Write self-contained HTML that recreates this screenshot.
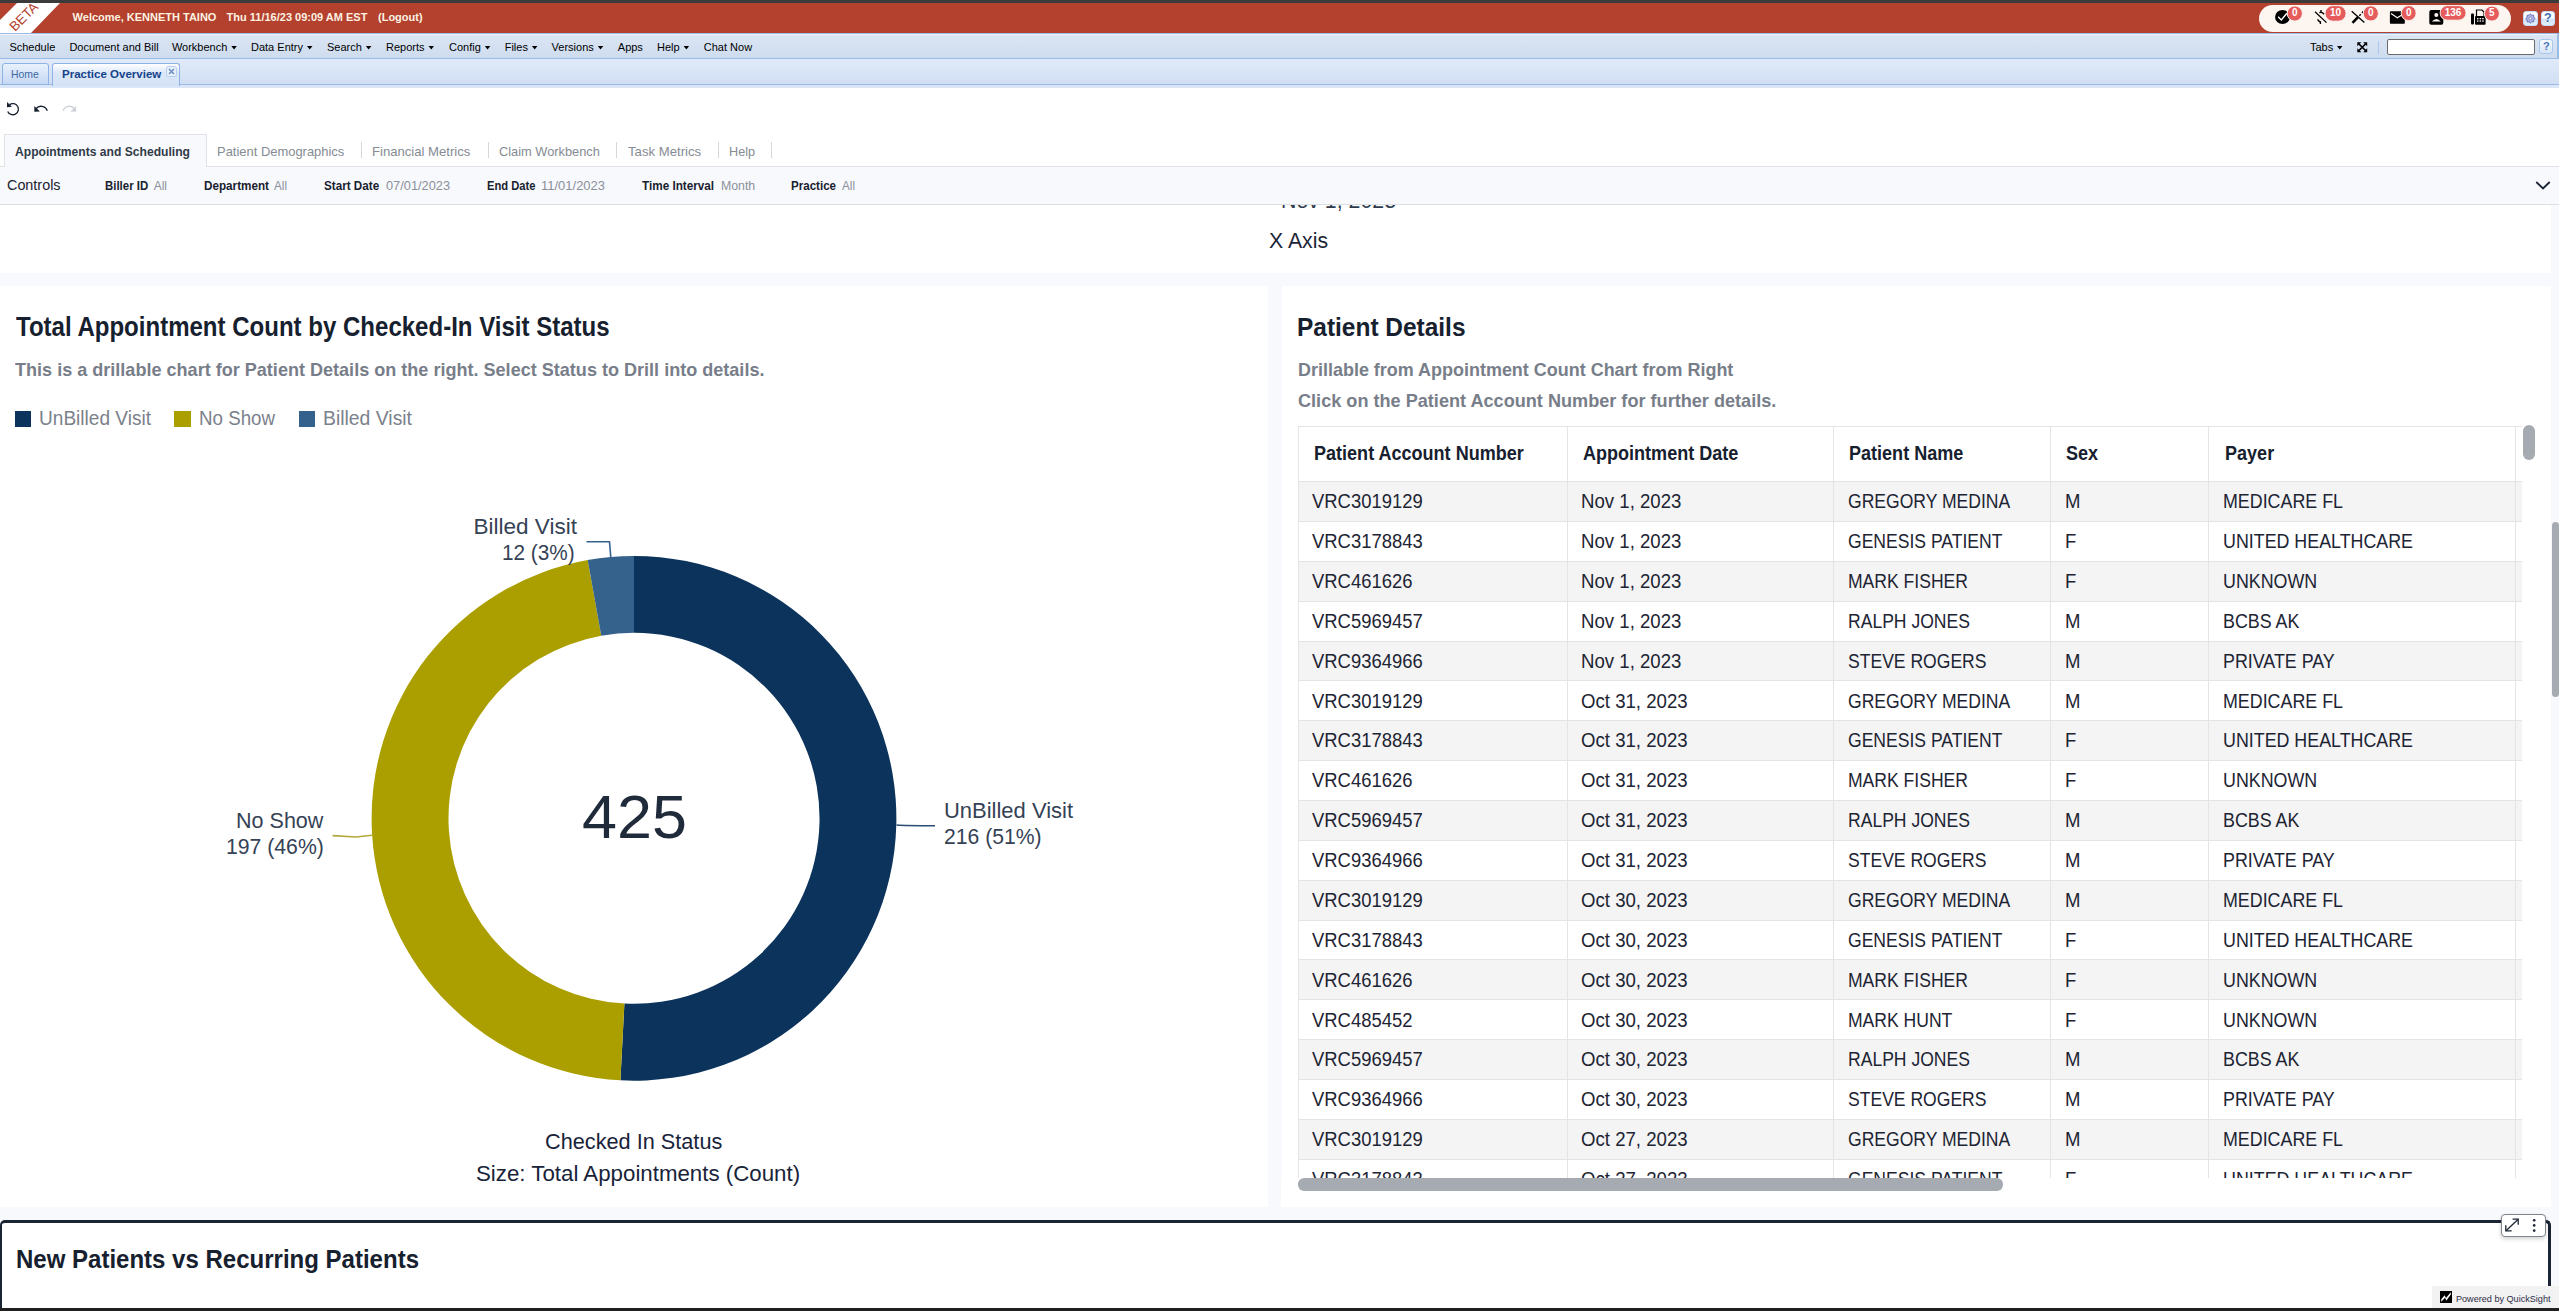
<!DOCTYPE html><html><head><meta charset="utf-8"><style>
html,body{margin:0;padding:0;width:2559px;height:1311px;overflow:hidden;background:#fff;font-family:"Liberation Sans", sans-serif;}
.t{position:absolute;white-space:nowrap;transform-origin:0 0;line-height:1;}
</style></head><body>
<div style="position:absolute;left:0px;top:88px;width:2559px;height:1223px;background:#ffffff;"></div>
<div style="position:absolute;left:0px;top:0px;width:2559px;height:3px;background:#3b3b3b;"></div>
<div style="position:absolute;left:0px;top:3px;width:2559px;height:30px;background:#b3412e;"></div>
<div style="position:absolute;left:0px;top:33px;width:2559px;height:26px;background:linear-gradient(#dbe6f4,#cfdcee);border-top:1px solid #99bbe8;border-bottom:1px solid #99bbe8;box-sizing:border-box;"></div>
<div style="position:absolute;left:0px;top:59px;width:2559px;height:29px;background:linear-gradient(#e0eafa,#cfdcf1);"></div>
<div style="position:absolute;left:2551px;top:204px;width:8px;height:1107px;background:#f8f9fd;"></div>
<div style="position:absolute;left:0px;top:273.3px;width:2551px;height:13.2px;background:#f8f9fd;"></div>
<div style="position:absolute;left:1268.4px;top:286px;width:13.2px;height:921px;background:#f8f9fd;"></div>
<div style="position:absolute;left:0px;top:1207px;width:2551px;height:12.5px;background:#f8f9fd;"></div>
<div class="t" style="left:1281.00px;top:190px;font-size:22px;color:#2f3b4c;transform:scaleX(0.9693);">Nov 1, 2023</div>
<svg style="position:absolute;left:0;top:3px" width="70" height="30"><polygon points="17,0 60,0 31,30 -13,30" fill="#fff"/><text x="0" y="0" transform="translate(15,29) rotate(-45)" font-family="Liberation Sans" font-size="13.5" fill="#b3412e">BETA</text></svg>
<div style="position:absolute;left:2259px;top:5px;width:251.5px;height:27px;background:#fcf5f0;border-radius:14px;"></div>
<div style="position:absolute;left:2557px;top:33px;width:2px;height:26px;background:#99bbe8;"></div>
<div style="position:absolute;left:0px;top:34px;width:2557px;height:1px;background:rgba(255,255,255,0.55);"></div>
<div style="position:absolute;left:0px;top:84.3px;width:2559px;height:1px;background:#99bbe8;"></div>
<div style="position:absolute;left:0px;top:85.3px;width:2559px;height:2.7px;background:#dbe7f9;"></div>
<div style="position:absolute;left:0px;top:166px;width:2559px;height:1px;background:#dfe2e7;"></div>
<div style="position:absolute;left:0px;top:167px;width:2559px;height:37.5px;background:#f8f9fd;border-bottom:1px solid #dcdfe4;box-sizing:border-box;"></div>
<div style="position:absolute;left:15px;top:410.6px;width:16px;height:16.3px;background:#0b335b;"></div>
<div style="position:absolute;left:174px;top:410.6px;width:16.6px;height:16.3px;background:#ab9f00;"></div>
<div style="position:absolute;left:299px;top:410.6px;width:16px;height:16.3px;background:#34628d;"></div>
<svg style="position:absolute;left:0;top:0" width="1268" height="1207">
<path d="M634.00 555.90 A262.4 262.4 0 1 1 620.43 1080.35 L624.41 1003.55 A185.5 185.5 0 1 0 634.00 632.80 Z" fill="#0b335b"/>
<path d="M620.43 1080.35 A262.4 262.4 0 0 1 587.69 560.02 L601.26 635.71 A185.5 185.5 0 0 0 624.41 1003.55 Z" fill="#ab9f00"/>
<path d="M587.69 560.02 A262.4 262.4 0 0 1 634.00 555.90 L634.00 632.80 A185.5 185.5 0 0 0 601.26 635.71 Z" fill="#34628d"/>
<path d="M586.5 541.8 H609.5 L610.8 557.5" fill="none" stroke="#34628d" stroke-width="1.6"/>
<path d="M896.5 825 Q905 825.7 935 825.7" fill="none" stroke="#2b4d72" stroke-width="1.6"/>
<path d="M332.6 835.6 L356 837 L372 835.3" fill="none" stroke="#b3a83a" stroke-width="1.6"/>
</svg>
<div style="position:absolute;left:1298px;top:426px;width:1224px;height:751.8px;overflow:hidden;"><div style="position:absolute;left:0;top:56px;width:1224px;height:40px;background:#f4f4f5;border-bottom:1px solid #e3e4e7;box-sizing:border-box;"></div><div style="position:absolute;left:0;top:96px;width:1224px;height:40px;background:#ffffff;border-bottom:1px solid #e3e4e7;box-sizing:border-box;"></div><div style="position:absolute;left:0;top:136px;width:1224px;height:40px;background:#f4f4f5;border-bottom:1px solid #e3e4e7;box-sizing:border-box;"></div><div style="position:absolute;left:0;top:176px;width:1224px;height:40px;background:#ffffff;border-bottom:1px solid #e3e4e7;box-sizing:border-box;"></div><div style="position:absolute;left:0;top:216px;width:1224px;height:39px;background:#f4f4f5;border-bottom:1px solid #e3e4e7;box-sizing:border-box;"></div><div style="position:absolute;left:0;top:255px;width:1224px;height:40px;background:#ffffff;border-bottom:1px solid #e3e4e7;box-sizing:border-box;"></div><div style="position:absolute;left:0;top:295px;width:1224px;height:40px;background:#f4f4f5;border-bottom:1px solid #e3e4e7;box-sizing:border-box;"></div><div style="position:absolute;left:0;top:335px;width:1224px;height:40px;background:#ffffff;border-bottom:1px solid #e3e4e7;box-sizing:border-box;"></div><div style="position:absolute;left:0;top:375px;width:1224px;height:40px;background:#f4f4f5;border-bottom:1px solid #e3e4e7;box-sizing:border-box;"></div><div style="position:absolute;left:0;top:415px;width:1224px;height:40px;background:#ffffff;border-bottom:1px solid #e3e4e7;box-sizing:border-box;"></div><div style="position:absolute;left:0;top:455px;width:1224px;height:40px;background:#f4f4f5;border-bottom:1px solid #e3e4e7;box-sizing:border-box;"></div><div style="position:absolute;left:0;top:495px;width:1224px;height:39px;background:#ffffff;border-bottom:1px solid #e3e4e7;box-sizing:border-box;"></div><div style="position:absolute;left:0;top:534px;width:1224px;height:40px;background:#f4f4f5;border-bottom:1px solid #e3e4e7;box-sizing:border-box;"></div><div style="position:absolute;left:0;top:574px;width:1224px;height:40px;background:#ffffff;border-bottom:1px solid #e3e4e7;box-sizing:border-box;"></div><div style="position:absolute;left:0;top:614px;width:1224px;height:40px;background:#f4f4f5;border-bottom:1px solid #e3e4e7;box-sizing:border-box;"></div><div style="position:absolute;left:0;top:654px;width:1224px;height:40px;background:#ffffff;border-bottom:1px solid #e3e4e7;box-sizing:border-box;"></div><div style="position:absolute;left:0;top:694px;width:1224px;height:40px;background:#f4f4f5;border-bottom:1px solid #e3e4e7;box-sizing:border-box;"></div><div style="position:absolute;left:0;top:734px;width:1224px;height:40px;background:#ffffff;border-bottom:1px solid #e3e4e7;box-sizing:border-box;"></div><div style="position:absolute;left:-0.50px;top:0;width:1px;height:100%;background:#e3e4e7;"></div><div style="position:absolute;left:268.80px;top:0;width:1px;height:100%;background:#e3e4e7;"></div><div style="position:absolute;left:535.30px;top:0;width:1px;height:100%;background:#e3e4e7;"></div><div style="position:absolute;left:752.40px;top:0;width:1px;height:100%;background:#e3e4e7;"></div><div style="position:absolute;left:910.00px;top:0;width:1px;height:100%;background:#e3e4e7;"></div><div style="position:absolute;left:1216.80px;top:0;width:1px;height:100%;background:#e3e4e7;"></div></div>

<svg style="position:absolute;left:0;top:0" width="2559" height="40">
 <g fill="#000">
  <!-- check circle -->
  <ellipse cx="2282.5" cy="17" rx="7.45" ry="7.05"/>
  <path d="M2278.2 16.7 L2281.3 20 L2286.9 13.2" stroke="#fff" stroke-width="1.4" fill="none"/>
  <!-- dollar slash -->
  <path d="M2315 11.8 L2326.5 22.6" stroke="#000" stroke-width="1.3"/>
  <path d="M2319.3 12.7 Q2322 11.6 2324.3 14.3 M2317.6 19.4 Q2318.8 22 2320.8 21.8" stroke="#000" stroke-width="1.4" fill="none"/>
  <path d="M2321 10 v2.5 M2320.4 21.5 v2.5" stroke="#000" stroke-width="1.4"/>
  <!-- x tool -->
  <path d="M2351.7 11.2 L2364.4 22.6" stroke="#000" stroke-width="1.3"/>
  <path d="M2352.5 22.8 L2358 17.2" stroke="#000" stroke-width="2.6"/>
  <path d="M2359.3 15.7 L2360.8 14.2 M2362 12.9 L2363.4 11.3" stroke="#000" stroke-width="1.5"/>
  <!-- envelope -->
  <rect x="2389.9" y="11.2" width="14.9" height="12.6" rx="0.8"/>
  <path d="M2391 13.5 L2397.3 17.7 L2402.6 14.4" stroke="#fcf5f0" stroke-width="1.2" fill="none"/>
  <!-- user card -->
  <rect x="2429.3" y="10" width="14" height="14.7" rx="2"/>
  <circle cx="2436.3" cy="15" r="2" fill="#fcf5f0"/>
  <path d="M2431.8 21.5 q4.5 -5 9 0 z" fill="#fcf5f0"/>
  <!-- fax -->
  <rect x="2471" y="13.5" width="3" height="11" rx="1"/>
  <rect x="2475" y="16" width="10.6" height="8.7" rx="1"/>
  <path d="M2476.5 16 v-6 h5.5 l2 2 v4" fill="none" stroke="#000" stroke-width="1.2"/>
  <g fill="#fcf5f0"><rect x="2477" y="18" width="1.5" height="1.3"/><rect x="2479.6" y="18" width="1.5" height="1.3"/><rect x="2482.2" y="18" width="1.5" height="1.3"/>
  <rect x="2477" y="20.4" width="1.5" height="1.3"/><rect x="2479.6" y="20.4" width="1.5" height="1.3"/><rect x="2482.2" y="20.4" width="1.5" height="1.3"/></g>
 </g>
 <g fill="#e65c5c" stroke="#fcf5f0" stroke-width="1">
  <circle cx="2294.8" cy="13.5" r="7.6"/>
  <rect x="2325" y="5.6" width="21.1" height="15.6" rx="7.8"/>
  <circle cx="2370.8" cy="13.4" r="7.6"/>
  <circle cx="2408.7" cy="13.1" r="7.5"/>
  <rect x="2440.1" y="5.6" width="26" height="14.6" rx="7.3"/>
  <circle cx="2491.9" cy="13.6" r="7.5"/>
 </g>
</svg>
<div style="position:absolute;left:2523px;top:11.1px;width:14.8px;height:14.9px;background:linear-gradient(#ffffff 45%,#d3e4f8 55%,#e2eefb);border:1px solid #c4dcf8;border-radius:3px;box-sizing:border-box;"></div>
<div style="position:absolute;left:2540.5px;top:11.1px;width:14.8px;height:14.9px;background:linear-gradient(#ffffff 45%,#d3e4f8 55%,#e2eefb);border:1px solid #c4dcf8;border-radius:3px;box-sizing:border-box;"></div>
<svg style="position:absolute;left:0;top:0" width="2559" height="60"><g fill="#000"><polygon points="231.3,46 236.8,46 234.1,49.5"/><polygon points="307.0,46 312.5,46 309.7,49.5"/><polygon points="365.9,46 371.4,46 368.6,49.5"/><polygon points="428.5,46 434.0,46 431.3,49.5"/><polygon points="484.8,46 490.3,46 487.6,49.5"/><polygon points="531.9,46 537.4,46 534.7,49.5"/><polygon points="597.8,46 603.3,46 600.5,49.5"/><polygon points="683.6,46 689.1,46 686.4,49.5"/><polygon points="2337,46 2342.5,46 2339.75,49.5"/></g></svg>
<svg style="position:absolute;left:2356.5px;top:42px" width="11" height="11"><g stroke="#000" stroke-width="1.7" fill="none"><path d="M2 2 L8.5 8.5 M8.5 2 L2 8.5"/></g><g fill="#000"><polygon points="0.3,0.3 4.3,0.3 0.3,4.3"/><polygon points="10.2,0.3 6.2,0.3 10.2,4.3"/><polygon points="0.3,10.2 4.3,10.2 0.3,6.2"/><polygon points="10.2,10.2 6.2,10.2 10.2,6.2"/></g></svg>
<div style="position:absolute;left:2378.3px;top:41px;width:1px;height:13px;background:#a9c6ec;"></div>
<div style="position:absolute;left:2387px;top:39.1px;width:148px;height:15.7px;background:#fff;border:1px solid #6b6b6b;border-radius:2px;box-sizing:border-box;"></div>
<div style="position:absolute;left:2539.4px;top:39px;width:13.8px;height:14.8px;background:linear-gradient(#f7fbff,#d6e4f6);border:1px solid #a9c6ec;border-radius:3px;box-sizing:border-box;"></div>
<div style="position:absolute;left:1.5px;top:63.3px;width:47px;height:21.5px;background:linear-gradient(#e9f1fc,#c5d8f3);border:1px solid #8db2e3;border-radius:3px 3px 0 0;box-sizing:border-box;"></div>
<div style="position:absolute;left:52px;top:62.9px;width:127.5px;height:23px;background:linear-gradient(#ffffff,#dce8f8 40%,#d3e2f6);border:1px solid #8db2e3;border-bottom:none;border-radius:3px 3px 0 0;box-sizing:border-box;"></div>
<svg style="position:absolute;left:0;top:95px" width="90" height="30">
 <g fill="none" stroke="#16202e" stroke-width="1.35">
  <path d="M7.7 16.4 A5.6 5.6 0 1 0 9.6 9.6"/>
  <path d="M47.3 15.8 C45.5 10.5 39 9.8 35.8 14"/>
 </g>
 <g fill="#16202e">
  <polygon points="7,6.9 7,12.3 12,11.8"/>
  <polygon points="34.3,10.9 34.3,16.8 39.9,16.5"/>
 </g>
 <path d="M63.1 15.8 C64.9 10.5 71.4 9.8 74.6 14" fill="none" stroke="#cdd1d7" stroke-width="1.35"/>
 <polygon points="76.1,10.9 76.1,16.8 70.5,16.5" fill="#cdd1d7"/>
</svg>
<div style="position:absolute;left:4.3px;top:134.2px;width:202.5px;height:33px;background:#f8f9fd;border:1px solid #dfe2e7;border-bottom:none;box-sizing:border-box;"></div>
<div style="position:absolute;left:361.2px;top:142px;width:1px;height:16px;background:#d4d8dd;"></div>
<div style="position:absolute;left:488.2px;top:142px;width:1px;height:16px;background:#d4d8dd;"></div>
<div style="position:absolute;left:616.3px;top:142px;width:1px;height:16px;background:#d4d8dd;"></div>
<div style="position:absolute;left:718.3px;top:142px;width:1px;height:16px;background:#d4d8dd;"></div>
<div style="position:absolute;left:771.2px;top:142px;width:1px;height:16px;background:#d4d8dd;"></div>
<svg style="position:absolute;left:2534px;top:179px" width="18" height="12"><path d="M2.3 3 L9 9.5 L15.7 3" fill="none" stroke="#1b2433" stroke-width="1.8"/></svg>
<div style="position:absolute;left:1298px;top:426px;width:1224px;height:1px;background:#e3e4e7;"></div>
<div style="position:absolute;left:1298px;top:481.0px;width:1224px;height:1px;background:#e3e4e7;"></div>
<div style="position:absolute;left:0px;top:1219.5px;width:2551px;height:92px;background:#fff;border:3px solid #1b2433;border-left-width:2.2px;border-bottom:none;border-radius:5px 5px 0 0;box-sizing:border-box;"></div>
<div style="position:absolute;left:2274.8px;top:6.6px;width:40px;text-align:center;font-size:10px;font-weight:bold;color:#fff;line-height:12px;">0</div>
<div style="position:absolute;left:2315.5px;top:6.6px;width:40px;text-align:center;font-size:10px;font-weight:bold;color:#fff;line-height:12px;">10</div>
<div style="position:absolute;left:2350.8px;top:6.6px;width:40px;text-align:center;font-size:10px;font-weight:bold;color:#fff;line-height:12px;">0</div>
<div style="position:absolute;left:2388.8px;top:6.6px;width:40px;text-align:center;font-size:10px;font-weight:bold;color:#fff;line-height:12px;">0</div>
<div style="position:absolute;left:2433.1px;top:6.6px;width:40px;text-align:center;font-size:10px;font-weight:bold;color:#fff;line-height:12px;">136</div>
<div style="position:absolute;left:2471.9px;top:6.6px;width:40px;text-align:center;font-size:10px;font-weight:bold;color:#fff;line-height:12px;">5</div>
<svg style="position:absolute;left:2523px;top:11px" width="15" height="15"><polygon points="12.00,7.50 10.73,8.88 10.65,10.75 8.78,10.83 7.40,12.10 6.02,10.83 4.15,10.75 4.07,8.88 2.80,7.50 4.07,6.12 4.15,4.25 6.02,4.17 7.40,2.90 8.78,4.17 10.65,4.25 10.73,6.12" fill="#aab5e8" stroke="#5f68ad" stroke-width="0.9" stroke-linejoin="round"/><circle cx="7.4" cy="7.5" r="1.3" fill="#fff" stroke="#6a72b5" stroke-width="0.7"/></svg>
<div style="position:absolute;left:2540.5px;top:11px;width:14.8px;text-align:center;font-size:12.5px;font-weight:bold;color:#3e6ea5;line-height:15px;">?</div>
<div style="position:absolute;left:2539.4px;top:39px;width:13.8px;text-align:center;font-size:11px;font-weight:bold;color:#4a78b8;line-height:15px;">?</div>
<svg style="position:absolute;left:166px;top:66px" width="11" height="11"><rect x="0.5" y="0.5" width="10" height="10" rx="2" fill="#e8f0fb" stroke="#b5cdee"/><path d="M3 3 L8 8 M8 3 L3 8" stroke="#6c8fc0" stroke-width="1.5"/></svg>
<div class="t" style="left:1313.60px;top:444px;font-size:19.5px;font-weight:bold;color:#16202e;transform:scaleX(0.9250);">Patient Account Number</div>
<div class="t" style="left:1583.40px;top:444px;font-size:19.5px;font-weight:bold;color:#16202e;transform:scaleX(0.9250);">Appointment Date</div>
<div class="t" style="left:1849.30px;top:444px;font-size:19.5px;font-weight:bold;color:#16202e;transform:scaleX(0.9250);">Patient Name</div>
<div class="t" style="left:2066.00px;top:444px;font-size:19.5px;font-weight:bold;color:#16202e;transform:scaleX(0.9250);">Sex</div>
<div class="t" style="left:2224.70px;top:444px;font-size:19.5px;font-weight:bold;color:#16202e;transform:scaleX(0.9250);">Payer</div>
<div class="t" style="left:1312.40px;top:492px;font-size:19.5px;color:#1d2433;transform:scaleX(0.9450);">VRC3019129</div>
<div class="t" style="left:1581.20px;top:492px;font-size:19.5px;color:#1d2433;transform:scaleX(0.9550);">Nov 1, 2023</div>
<div class="t" style="left:1847.80px;top:492px;font-size:19.5px;color:#1d2433;transform:scaleX(0.9000);">GREGORY MEDINA</div>
<div class="t" style="left:2065.00px;top:492px;font-size:19.5px;color:#1d2433;transform:scaleX(0.9500);">M</div>
<div class="t" style="left:2222.50px;top:492px;font-size:19.5px;color:#1d2433;transform:scaleX(0.9150);">MEDICARE FL</div>
<div class="t" style="left:1312.40px;top:532px;font-size:19.5px;color:#1d2433;transform:scaleX(0.9450);">VRC3178843</div>
<div class="t" style="left:1581.20px;top:532px;font-size:19.5px;color:#1d2433;transform:scaleX(0.9550);">Nov 1, 2023</div>
<div class="t" style="left:1847.80px;top:532px;font-size:19.5px;color:#1d2433;transform:scaleX(0.9000);">GENESIS PATIENT</div>
<div class="t" style="left:2065.00px;top:532px;font-size:19.5px;color:#1d2433;transform:scaleX(0.9500);">F</div>
<div class="t" style="left:2222.50px;top:532px;font-size:19.5px;color:#1d2433;transform:scaleX(0.9150);">UNITED HEALTHCARE</div>
<div class="t" style="left:1312.40px;top:572px;font-size:19.5px;color:#1d2433;transform:scaleX(0.9450);">VRC461626</div>
<div class="t" style="left:1581.20px;top:572px;font-size:19.5px;color:#1d2433;transform:scaleX(0.9550);">Nov 1, 2023</div>
<div class="t" style="left:1847.80px;top:572px;font-size:19.5px;color:#1d2433;transform:scaleX(0.9000);">MARK FISHER</div>
<div class="t" style="left:2065.00px;top:572px;font-size:19.5px;color:#1d2433;transform:scaleX(0.9500);">F</div>
<div class="t" style="left:2222.50px;top:572px;font-size:19.5px;color:#1d2433;transform:scaleX(0.9150);">UNKNOWN</div>
<div class="t" style="left:1312.40px;top:612px;font-size:19.5px;color:#1d2433;transform:scaleX(0.9450);">VRC5969457</div>
<div class="t" style="left:1581.20px;top:612px;font-size:19.5px;color:#1d2433;transform:scaleX(0.9550);">Nov 1, 2023</div>
<div class="t" style="left:1847.80px;top:612px;font-size:19.5px;color:#1d2433;transform:scaleX(0.9000);">RALPH JONES</div>
<div class="t" style="left:2065.00px;top:612px;font-size:19.5px;color:#1d2433;transform:scaleX(0.9500);">M</div>
<div class="t" style="left:2222.50px;top:612px;font-size:19.5px;color:#1d2433;transform:scaleX(0.9150);">BCBS AK</div>
<div class="t" style="left:1312.40px;top:652px;font-size:19.5px;color:#1d2433;transform:scaleX(0.9450);">VRC9364966</div>
<div class="t" style="left:1581.20px;top:652px;font-size:19.5px;color:#1d2433;transform:scaleX(0.9550);">Nov 1, 2023</div>
<div class="t" style="left:1847.80px;top:652px;font-size:19.5px;color:#1d2433;transform:scaleX(0.9000);">STEVE ROGERS</div>
<div class="t" style="left:2065.00px;top:652px;font-size:19.5px;color:#1d2433;transform:scaleX(0.9500);">M</div>
<div class="t" style="left:2222.50px;top:652px;font-size:19.5px;color:#1d2433;transform:scaleX(0.9150);">PRIVATE PAY</div>
<div class="t" style="left:1312.40px;top:692px;font-size:19.5px;color:#1d2433;transform:scaleX(0.9450);">VRC3019129</div>
<div class="t" style="left:1581.20px;top:692px;font-size:19.5px;color:#1d2433;transform:scaleX(0.9550);">Oct 31, 2023</div>
<div class="t" style="left:1847.80px;top:692px;font-size:19.5px;color:#1d2433;transform:scaleX(0.9000);">GREGORY MEDINA</div>
<div class="t" style="left:2065.00px;top:692px;font-size:19.5px;color:#1d2433;transform:scaleX(0.9500);">M</div>
<div class="t" style="left:2222.50px;top:692px;font-size:19.5px;color:#1d2433;transform:scaleX(0.9150);">MEDICARE FL</div>
<div class="t" style="left:1312.40px;top:731px;font-size:19.5px;color:#1d2433;transform:scaleX(0.9450);">VRC3178843</div>
<div class="t" style="left:1581.20px;top:731px;font-size:19.5px;color:#1d2433;transform:scaleX(0.9550);">Oct 31, 2023</div>
<div class="t" style="left:1847.80px;top:731px;font-size:19.5px;color:#1d2433;transform:scaleX(0.9000);">GENESIS PATIENT</div>
<div class="t" style="left:2065.00px;top:731px;font-size:19.5px;color:#1d2433;transform:scaleX(0.9500);">F</div>
<div class="t" style="left:2222.50px;top:731px;font-size:19.5px;color:#1d2433;transform:scaleX(0.9150);">UNITED HEALTHCARE</div>
<div class="t" style="left:1312.40px;top:771px;font-size:19.5px;color:#1d2433;transform:scaleX(0.9450);">VRC461626</div>
<div class="t" style="left:1581.20px;top:771px;font-size:19.5px;color:#1d2433;transform:scaleX(0.9550);">Oct 31, 2023</div>
<div class="t" style="left:1847.80px;top:771px;font-size:19.5px;color:#1d2433;transform:scaleX(0.9000);">MARK FISHER</div>
<div class="t" style="left:2065.00px;top:771px;font-size:19.5px;color:#1d2433;transform:scaleX(0.9500);">F</div>
<div class="t" style="left:2222.50px;top:771px;font-size:19.5px;color:#1d2433;transform:scaleX(0.9150);">UNKNOWN</div>
<div class="t" style="left:1312.40px;top:811px;font-size:19.5px;color:#1d2433;transform:scaleX(0.9450);">VRC5969457</div>
<div class="t" style="left:1581.20px;top:811px;font-size:19.5px;color:#1d2433;transform:scaleX(0.9550);">Oct 31, 2023</div>
<div class="t" style="left:1847.80px;top:811px;font-size:19.5px;color:#1d2433;transform:scaleX(0.9000);">RALPH JONES</div>
<div class="t" style="left:2065.00px;top:811px;font-size:19.5px;color:#1d2433;transform:scaleX(0.9500);">M</div>
<div class="t" style="left:2222.50px;top:811px;font-size:19.5px;color:#1d2433;transform:scaleX(0.9150);">BCBS AK</div>
<div class="t" style="left:1312.40px;top:851px;font-size:19.5px;color:#1d2433;transform:scaleX(0.9450);">VRC9364966</div>
<div class="t" style="left:1581.20px;top:851px;font-size:19.5px;color:#1d2433;transform:scaleX(0.9550);">Oct 31, 2023</div>
<div class="t" style="left:1847.80px;top:851px;font-size:19.5px;color:#1d2433;transform:scaleX(0.9000);">STEVE ROGERS</div>
<div class="t" style="left:2065.00px;top:851px;font-size:19.5px;color:#1d2433;transform:scaleX(0.9500);">M</div>
<div class="t" style="left:2222.50px;top:851px;font-size:19.5px;color:#1d2433;transform:scaleX(0.9150);">PRIVATE PAY</div>
<div class="t" style="left:1312.40px;top:891px;font-size:19.5px;color:#1d2433;transform:scaleX(0.9450);">VRC3019129</div>
<div class="t" style="left:1581.20px;top:891px;font-size:19.5px;color:#1d2433;transform:scaleX(0.9550);">Oct 30, 2023</div>
<div class="t" style="left:1847.80px;top:891px;font-size:19.5px;color:#1d2433;transform:scaleX(0.9000);">GREGORY MEDINA</div>
<div class="t" style="left:2065.00px;top:891px;font-size:19.5px;color:#1d2433;transform:scaleX(0.9500);">M</div>
<div class="t" style="left:2222.50px;top:891px;font-size:19.5px;color:#1d2433;transform:scaleX(0.9150);">MEDICARE FL</div>
<div class="t" style="left:1312.40px;top:931px;font-size:19.5px;color:#1d2433;transform:scaleX(0.9450);">VRC3178843</div>
<div class="t" style="left:1581.20px;top:931px;font-size:19.5px;color:#1d2433;transform:scaleX(0.9550);">Oct 30, 2023</div>
<div class="t" style="left:1847.80px;top:931px;font-size:19.5px;color:#1d2433;transform:scaleX(0.9000);">GENESIS PATIENT</div>
<div class="t" style="left:2065.00px;top:931px;font-size:19.5px;color:#1d2433;transform:scaleX(0.9500);">F</div>
<div class="t" style="left:2222.50px;top:931px;font-size:19.5px;color:#1d2433;transform:scaleX(0.9150);">UNITED HEALTHCARE</div>
<div class="t" style="left:1312.40px;top:971px;font-size:19.5px;color:#1d2433;transform:scaleX(0.9450);">VRC461626</div>
<div class="t" style="left:1581.20px;top:971px;font-size:19.5px;color:#1d2433;transform:scaleX(0.9550);">Oct 30, 2023</div>
<div class="t" style="left:1847.80px;top:971px;font-size:19.5px;color:#1d2433;transform:scaleX(0.9000);">MARK FISHER</div>
<div class="t" style="left:2065.00px;top:971px;font-size:19.5px;color:#1d2433;transform:scaleX(0.9500);">F</div>
<div class="t" style="left:2222.50px;top:971px;font-size:19.5px;color:#1d2433;transform:scaleX(0.9150);">UNKNOWN</div>
<div class="t" style="left:1312.40px;top:1011px;font-size:19.5px;color:#1d2433;transform:scaleX(0.9450);">VRC485452</div>
<div class="t" style="left:1581.20px;top:1011px;font-size:19.5px;color:#1d2433;transform:scaleX(0.9550);">Oct 30, 2023</div>
<div class="t" style="left:1847.80px;top:1011px;font-size:19.5px;color:#1d2433;transform:scaleX(0.9000);">MARK HUNT</div>
<div class="t" style="left:2065.00px;top:1011px;font-size:19.5px;color:#1d2433;transform:scaleX(0.9500);">F</div>
<div class="t" style="left:2222.50px;top:1011px;font-size:19.5px;color:#1d2433;transform:scaleX(0.9150);">UNKNOWN</div>
<div class="t" style="left:1312.40px;top:1050px;font-size:19.5px;color:#1d2433;transform:scaleX(0.9450);">VRC5969457</div>
<div class="t" style="left:1581.20px;top:1050px;font-size:19.5px;color:#1d2433;transform:scaleX(0.9550);">Oct 30, 2023</div>
<div class="t" style="left:1847.80px;top:1050px;font-size:19.5px;color:#1d2433;transform:scaleX(0.9000);">RALPH JONES</div>
<div class="t" style="left:2065.00px;top:1050px;font-size:19.5px;color:#1d2433;transform:scaleX(0.9500);">M</div>
<div class="t" style="left:2222.50px;top:1050px;font-size:19.5px;color:#1d2433;transform:scaleX(0.9150);">BCBS AK</div>
<div class="t" style="left:1312.40px;top:1090px;font-size:19.5px;color:#1d2433;transform:scaleX(0.9450);">VRC9364966</div>
<div class="t" style="left:1581.20px;top:1090px;font-size:19.5px;color:#1d2433;transform:scaleX(0.9550);">Oct 30, 2023</div>
<div class="t" style="left:1847.80px;top:1090px;font-size:19.5px;color:#1d2433;transform:scaleX(0.9000);">STEVE ROGERS</div>
<div class="t" style="left:2065.00px;top:1090px;font-size:19.5px;color:#1d2433;transform:scaleX(0.9500);">M</div>
<div class="t" style="left:2222.50px;top:1090px;font-size:19.5px;color:#1d2433;transform:scaleX(0.9150);">PRIVATE PAY</div>
<div class="t" style="left:1312.40px;top:1130px;font-size:19.5px;color:#1d2433;transform:scaleX(0.9450);">VRC3019129</div>
<div class="t" style="left:1581.20px;top:1130px;font-size:19.5px;color:#1d2433;transform:scaleX(0.9550);">Oct 27, 2023</div>
<div class="t" style="left:1847.80px;top:1130px;font-size:19.5px;color:#1d2433;transform:scaleX(0.9000);">GREGORY MEDINA</div>
<div class="t" style="left:2065.00px;top:1130px;font-size:19.5px;color:#1d2433;transform:scaleX(0.9500);">M</div>
<div class="t" style="left:2222.50px;top:1130px;font-size:19.5px;color:#1d2433;transform:scaleX(0.9150);">MEDICARE FL</div>
<div class="t" style="left:1312.40px;top:1170px;font-size:19.5px;color:#1d2433;transform:scaleX(0.9450);">VRC3178843</div>
<div class="t" style="left:1581.20px;top:1170px;font-size:19.5px;color:#1d2433;transform:scaleX(0.9550);">Oct 27, 2023</div>
<div class="t" style="left:1847.80px;top:1170px;font-size:19.5px;color:#1d2433;transform:scaleX(0.9000);">GENESIS PATIENT</div>
<div class="t" style="left:2065.00px;top:1170px;font-size:19.5px;color:#1d2433;transform:scaleX(0.9500);">F</div>
<div class="t" style="left:2222.50px;top:1170px;font-size:19.5px;color:#1d2433;transform:scaleX(0.9150);">UNITED HEALTHCARE</div>
<div class="t" style="left:72.60px;top:12px;font-size:11px;font-weight:bold;color:#fdf2e2;">Welcome, KENNETH TAINO</div>
<div class="t" style="left:226.60px;top:12px;font-size:11px;font-weight:bold;color:#fdf2e2;">Thu 11/16/23 09:09 AM EST</div>
<div class="t" style="left:378.00px;top:12px;font-size:11px;font-weight:bold;color:#fdf2e2;">(Logout)</div>
<div class="t" style="left:9.40px;top:42px;font-size:11px;color:#000;">Schedule</div>
<div class="t" style="left:69.40px;top:42px;font-size:11px;color:#000;">Document and Bill</div>
<div class="t" style="left:171.90px;top:42px;font-size:11px;color:#000;">Workbench</div>
<div class="t" style="left:251.00px;top:42px;font-size:11px;color:#000;">Data Entry</div>
<div class="t" style="left:327.00px;top:42px;font-size:11px;color:#000;">Search</div>
<div class="t" style="left:386.00px;top:42px;font-size:11px;color:#000;">Reports</div>
<div class="t" style="left:449.00px;top:42px;font-size:11px;color:#000;">Config</div>
<div class="t" style="left:504.70px;top:42px;font-size:11px;color:#000;">Files</div>
<div class="t" style="left:551.60px;top:42px;font-size:11px;color:#000;">Versions</div>
<div class="t" style="left:617.80px;top:42px;font-size:11px;color:#000;">Apps</div>
<div class="t" style="left:657.00px;top:42px;font-size:11px;color:#000;">Help</div>
<div class="t" style="left:703.80px;top:42px;font-size:11px;color:#000;">Chat Now</div>
<div class="t" style="left:2310.00px;top:42px;font-size:11px;color:#000;">Tabs</div>
<div class="t" style="left:11.25px;top:69px;font-size:11px;color:#416aa3;transform:scaleX(0.9474);">Home</div>
<div class="t" style="left:61.70px;top:69px;font-size:11px;font-weight:bold;color:#15428b;transform:scaleX(1.0476);">Practice Overview</div>
<div class="t" style="left:15.00px;top:145px;font-size:13px;font-weight:bold;color:#303b47;transform:scaleX(0.9320);">Appointments and Scheduling</div>
<div class="t" style="left:216.70px;top:145px;font-size:13px;color:#858b93;transform:scaleX(0.9953);">Patient Demographics</div>
<div class="t" style="left:372.00px;top:145px;font-size:13px;color:#858b93;transform:scaleX(1.0079);">Financial Metrics</div>
<div class="t" style="left:498.80px;top:145px;font-size:13px;color:#858b93;transform:scaleX(0.9858);">Claim Workbench</div>
<div class="t" style="left:627.90px;top:145px;font-size:13px;color:#858b93;transform:scaleX(1.0120);">Task Metrics</div>
<div class="t" style="left:728.80px;top:145px;font-size:13px;color:#858b93;transform:scaleX(0.9725);">Help</div>
<div class="t" style="left:7.00px;top:178px;font-size:14px;color:#19212f;transform:scaleX(1.0263);">Controls</div>
<div class="t" style="left:104.80px;top:180px;font-size:12px;font-weight:bold;color:#19212f;transform:scaleX(0.9527);">Biller ID</div>
<div class="t" style="left:153.70px;top:180px;font-size:12px;color:#8a9099;">All</div>
<div class="t" style="left:203.70px;top:180px;font-size:12px;font-weight:bold;color:#19212f;transform:scaleX(0.9748);">Department</div>
<div class="t" style="left:274.40px;top:180px;font-size:12px;color:#8a9099;transform:scaleX(0.9748);">All</div>
<div class="t" style="left:324.30px;top:180px;font-size:12px;font-weight:bold;color:#19212f;transform:scaleX(0.9738);">Start Date</div>
<div class="t" style="left:385.50px;top:180px;font-size:12px;color:#8a9099;transform:scaleX(1.0656);">07/01/2023</div>
<div class="t" style="left:486.50px;top:180px;font-size:12px;font-weight:bold;color:#19212f;transform:scaleX(0.9326);">End Date</div>
<div class="t" style="left:541.00px;top:180px;font-size:12px;color:#8a9099;transform:scaleX(1.0817);">11/01/2023</div>
<div class="t" style="left:642.20px;top:180px;font-size:12px;font-weight:bold;color:#19212f;transform:scaleX(0.9768);">Time Interval</div>
<div class="t" style="left:720.80px;top:180px;font-size:12px;color:#8a9099;transform:scaleX(1.0254);">Month</div>
<div class="t" style="left:791.40px;top:180px;font-size:12px;font-weight:bold;color:#19212f;transform:scaleX(0.9636);">Practice</div>
<div class="t" style="left:842.40px;top:180px;font-size:12px;color:#8a9099;transform:scaleX(0.9748);">All</div>
<div class="t" style="left:1268.80px;top:230px;font-size:22px;color:#1c2638;transform:scaleX(0.9656);">X Axis</div>
<div class="t" style="left:15.60px;top:314px;font-size:27px;font-weight:bold;color:#16202e;transform:scaleX(0.8899);">Total Appointment Count by Checked-In Visit Status</div>
<div class="t" style="left:15.30px;top:361px;font-size:18.5px;font-weight:bold;color:#787e89;transform:scaleX(0.9760);">This is a drillable chart for Patient Details on the right. Select Status to Drill into details.</div>
<div class="t" style="left:39.00px;top:409px;font-size:19.5px;color:#7b818b;transform:scaleX(0.9780);">UnBilled Visit</div>
<div class="t" style="left:199.00px;top:409px;font-size:19.5px;color:#7b818b;transform:scaleX(0.9605);">No Show</div>
<div class="t" style="left:323.00px;top:409px;font-size:19.5px;color:#7b818b;transform:scaleX(0.9933);">Billed Visit</div>
<div class="t" style="left:473.50px;top:516px;font-size:22.5px;color:#354255;">Billed Visit</div>
<div class="t" style="left:502.30px;top:542px;font-size:22.5px;color:#354255;transform:scaleX(0.9228);">12 (3%)</div>
<div class="t" style="left:944.00px;top:800px;font-size:22.5px;color:#354255;transform:scaleX(0.9762);">UnBilled Visit</div>
<div class="t" style="left:944.00px;top:826px;font-size:22.5px;color:#354255;transform:scaleX(0.9392);">216 (51%)</div>
<div class="t" style="left:236.40px;top:810px;font-size:22.5px;color:#354255;transform:scaleX(0.9573);">No Show</div>
<div class="t" style="left:226.00px;top:836px;font-size:22.5px;color:#354255;transform:scaleX(0.9421);">197 (46%)</div>
<div class="t" style="left:582.00px;top:786px;font-size:62px;color:#1f2a3a;transform:scaleX(1.0150);">425</div>
<div class="t" style="left:545.10px;top:1132px;font-size:21.5px;color:#18233a;transform:scaleX(1.0092);">Checked In Status</div>
<div class="t" style="left:475.50px;top:1164px;font-size:21.5px;color:#18233a;transform:scaleX(1.0363);">Size: Total Appointments (Count)</div>
<div class="t" style="left:1296.60px;top:314px;font-size:26.5px;font-weight:bold;color:#16202e;transform:scaleX(0.9227);">Patient Details</div>
<div class="t" style="left:1297.50px;top:361px;font-size:18.5px;font-weight:bold;color:#787e89;transform:scaleX(0.9708);">Drillable from Appointment Count Chart from Right</div>
<div class="t" style="left:1297.50px;top:392px;font-size:18.5px;font-weight:bold;color:#787e89;transform:scaleX(0.9790);">Click on the Patient Account Number for further details.</div>
<div class="t" style="left:16.00px;top:1246px;font-size:26.5px;font-weight:bold;color:#16202e;transform:scaleX(0.9061);">New Patients vs Recurring Patients</div>
<div style="position:absolute;left:1281px;top:1177.8px;width:1270px;height:29.200000000000045px;background:#fff;"></div>
<div style="position:absolute;left:2501.4px;top:1213.6px;width:45px;height:23.5px;background:#fff;border:1px solid #7d848d;border-radius:4px;box-sizing:border-box;box-shadow:0 2px 4px rgba(0,0,0,0.18);"></div>
<div style="position:absolute;left:2432px;top:1285.7px;width:127px;height:22.3px;background:#f2f2f3;"></div>
<div style="position:absolute;left:1297.6px;top:1178.3px;width:705.5px;height:12.4px;background:#a6aab1;border-radius:6.2px;"></div>
<div style="position:absolute;left:2523px;top:425px;width:12px;height:34.5px;background:#a6aab1;border-radius:6px;"></div>
<div style="position:absolute;left:2551.5px;top:522px;width:7.5px;height:175px;background:#a6aab1;border-radius:4px;"></div>
<svg style="position:absolute;left:2501px;top:1213px" width="46" height="25">
<g fill="none" stroke="#1b2433" stroke-width="1.3">
 <path d="M5 17.8 L17.2 6.2"/>
 <path d="M11.6 6.2 H17.2 V11.8"/>
 <path d="M4.8 12.2 V17.9 H10.6"/>
</g>
<g fill="#1b2433"><circle cx="33.2" cy="7.2" r="1.3"/><circle cx="33.2" cy="12.4" r="1.3"/><circle cx="33.2" cy="17.6" r="1.3"/></g>
</svg>
<svg style="position:absolute;left:2440px;top:1291px" width="13" height="13"><rect x="0" y="0" width="12" height="12" fill="#000"/><path d="M1.2 10.8 L1.2 8.6 L4.6 4.2 L6 7 L10.8 1.2 L10.8 3.4 L6.4 9.4 L5 6.8 Z" fill="#fff"/></svg>
<div class="t" style="left:2456.30px;top:1295px;font-size:9px;color:#2b2b45;transform:scaleX(1.0102);">Powered by QuickSight</div>
<div style="position:absolute;left:0px;top:1307.8px;width:2559px;height:3.2px;background:#202020;"></div>
</body></html>
